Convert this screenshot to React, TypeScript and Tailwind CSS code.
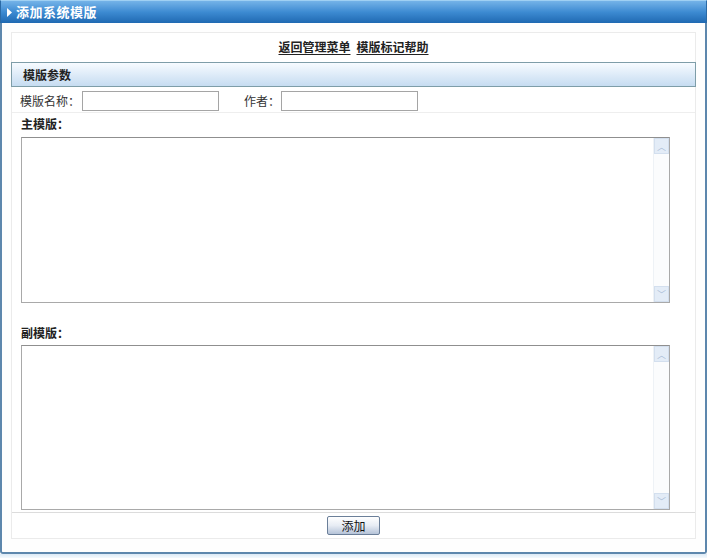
import { useState } from 'react'

const cjk = { fontFamily: '"Noto Sans CJK SC", "Liberation Sans", sans-serif' }

function FakeScroll() {
  return (
    <div className="absolute right-0 top-0 bottom-0 w-[16px] border-l border-[#eef2f6] bg-[#fbfcfd] flex flex-col justify-between">
      <div className="h-[16px] bg-[#e3ecf7] border border-[#d3dfee] flex items-center justify-center text-[#a9bdd6] text-[9px] leading-none">
        ︿
      </div>
      <div className="h-[16px] bg-[#e3ecf7] border border-[#d3dfee] flex items-center justify-center text-[#a9bdd6] text-[9px] leading-none">
        ﹀
      </div>
    </div>
  )
}

function TemplateBox({ value, onChange, tall }: { value: string; onChange: (v: string) => void; tall?: boolean }) {
  return (
    <div className={`relative w-[649px] ${tall ? 'h-[166px]' : 'h-[165px]'} border border-[#a9a9a9] border-t-[#8f8f8f] bg-white`}>
      <textarea
        value={value}
        onChange={(e) => onChange(e.target.value)}
        className="w-full h-full resize-none outline-none pr-[18px] text-[12px]"
      />
      <FakeScroll />
    </div>
  )
}

export default function App() {
  const [name, setName] = useState('')
  const [author, setAuthor] = useState('')
  const [main, setMain] = useState('')
  const [sub, setSub] = useState('')

  return (
    <div className="w-[707px] h-[558px] bg-white text-[12px] text-[#222] overflow-hidden" style={cjk}>
      {/* title bar */}
      <div className="h-[23px] bg-gradient-to-b from-[#74b3e8] via-[#3d8bd2] to-[#1f69b2] border-t border-[#9fd0f3] border-x border-x-[#2a6aa6] flex items-center pl-[6px] gap-[4px]">
        <svg width="5" height="9" viewBox="0 0 5 9">
          <path d="M0 0 L5 4.5 L0 9 Z" fill="#fff" />
        </svg>
        <span className="text-white font-bold text-[13px] tracking-[0.5px]">添加系统模版</span>
      </div>

      {/* frame */}
      <div className="h-[531px] border-x-2 border-b-2 border-[#5d87ad] rounded-b-[3px] bg-[#fefefe] pt-[9px] px-[9px] pb-[13px]">
        <div className="h-full border border-[#ebebeb] bg-white flex flex-col [&>*]:shrink-0">
          <div className="h-[27px] flex items-center justify-center gap-[6px] font-bold text-[12px] text-[#222]">
            <a className="underline underline-offset-2">返回管理菜单</a>
            <a className="underline underline-offset-2">模版标记帮助</a>
          </div>

          <div className="mt-[2px] h-[25px] -mx-[1px] border border-[#7e9da8] bg-gradient-to-b from-[#f7fbff] to-[#c6dcf1] flex items-center pl-[11px] font-bold text-[12px]">
            模版参数
          </div>

          <div className="h-[26px] pt-[2px] flex items-center border-b border-[#eeeeee] pl-[8px]">
            <span className="text-[#333]">模版名称：</span>
            <input
              value={name}
              onChange={(e) => setName(e.target.value)}
              className="ml-[2px] w-[137px] h-[20px] border border-[#a5a5a5] outline-none px-1"
            />
            <span className="ml-[25px] text-[#333]">作者：</span>
            <input
              value={author}
              onChange={(e) => setAuthor(e.target.value)}
              className="ml-[1px] w-[137px] h-[20px] border border-[#a5a5a5] outline-none px-1"
            />
          </div>

          <div className="pl-[9px] pt-[2px] flex flex-col">
            <span className="font-bold h-[18px] leading-[18px]">主模版：</span>
            <div className="mt-[4px]">
              <TemplateBox value={main} onChange={setMain} tall />
            </div>
            <span className="font-bold h-[18px] leading-[18px] mt-[21px]">副模版：</span>
            <div className="mt-[3px]">
              <TemplateBox value={sub} onChange={setSub} />
            </div>
          </div>

          <div className="mt-[2px] border-t border-[#dcdcdc] flex justify-center pt-[3px]">
            <button className="w-[53px] h-[19px] border border-[#6b7f99] rounded-[2px] bg-gradient-to-b from-[#ffffff] via-[#e7ecf4] to-[#b5c3d8] text-[12px] leading-none text-[#111]">
              添加
            </button>
          </div>
        </div>
      </div>
      <div className="h-[4px] bg-gradient-to-b from-[#dceaf6] to-[#f4f9fd]" />
    </div>
  )
}
